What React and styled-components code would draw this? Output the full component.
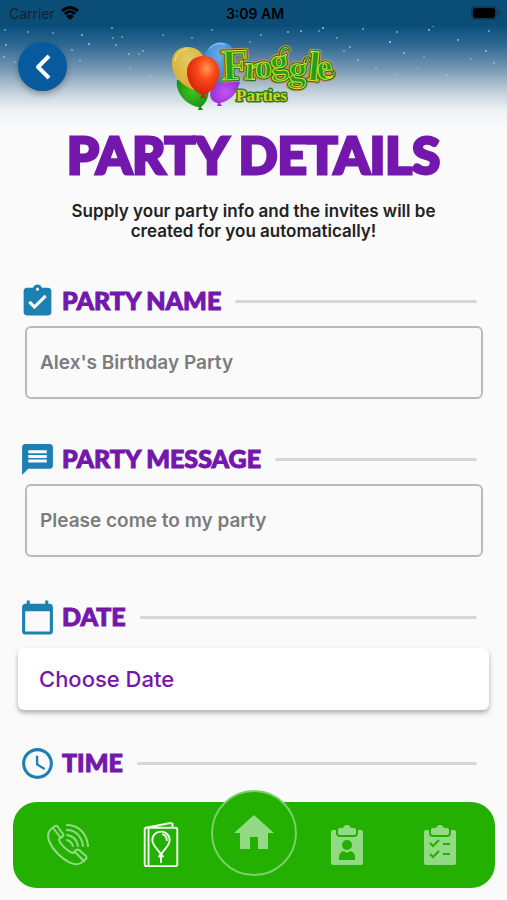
import styled, { createGlobalStyle } from 'styled-components';
import { MdAssignmentTurnedIn, MdMessage, MdCalendarToday, MdAccessTime, MdHome } from 'react-icons/md';

// [x, y, opacity]
const stars = [
    [5, 30, .5], [6, 45, .7], [28, 32, .6], [34, 50, .6], [53, 33, .5], [4, 57, .6], [72, 50, .6],
    [82, 35, .7], [89, 44, .8], [112, 28, .6], [113, 38, .5], [122, 37, .5], [116, 45, .6], [129, 54, .6],
    [139, 54, .5], [143, 51, .6], [163, 35, .5], [192, 38, .5], [250, 42, .5], [261, 35, .6], [288, 32, .7],
    [301, 31, .7], [319, 31, .5], [323, 28, .8], [344, 51, .5], [350, 47, .6], [363, 29, .6], [390, 42, .9],
    [397, 32, .6], [404, 53, .7], [429, 30, .8], [433, 26, .6], [458, 40, .7], [486, 51, .7], [489, 31, .6],
    [494, 63, .5], [447, 75, .5], [424, 57, .4], [397, 75, .4], [376, 68, .4], [358, 60, .5], [130, 68, .4],
    [80, 61, .5], [15, 62, .4], [150, 76, .4], [418, 68, .3], [471, 59, .4], [337, 38, .5], [212, 30, .5],
];

// [char, x, y, size, turn]
const letters = [
    ['F', 53, 38, 44, -2], ['r', 75, 37, 34, 3], ['o', 86, 36, 34, 0], ['g', 102, 32, 36, -5],
    ['g', 119, 38, 36, 5], ['l', 138, 38, 42, 6], ['e', 149, 38, 36, -8],
];

const Word = () => letters.map(([char, x, y, size, turn], i) => (
    <Letter key={i} x={x} y={y} fontSize={size} transform={`rotate(${turn} ${x} ${y})`}>{char}</Letter>
));

const curls = 'M112 14C110 6 118 3 120 8M135 21C135 15 141 14 141 19M157 35C164 38 168 31 163 29';

const Logo = () => (
    <LogoSvg viewBox="0 0 170 74" role="img" aria-label="Froggle Parties">
        <defs>
            <radialGradient id="red" cx=".6" cy=".3" r=".75">
                <stop offset="0" stopColor="#ff9a55" />
                <stop offset=".35" stopColor="#fb4a18" />
                <stop offset="1" stopColor="#c91508" />
            </radialGradient>
            <radialGradient id="gold" cx=".5" cy=".3" r=".8">
                <stop offset="0" stopColor="#e0cb62" />
                <stop offset=".6" stopColor="#dcb53e" />
                <stop offset="1" stopColor="#ef9a22" />
            </radialGradient>
            <radialGradient id="blue" cx=".5" cy=".3" r=".8">
                <stop offset="0" stopColor="#69aeea" />
                <stop offset="1" stopColor="#2372c4" />
            </radialGradient>
            <radialGradient id="purple" cx=".5" cy=".5" r=".7">
                <stop offset="0" stopColor="#c156f5" />
                <stop offset="1" stopColor="#8c20c8" />
            </radialGradient>
            <radialGradient id="green" cx=".5" cy=".4" r=".7">
                <stop offset="0" stopColor="#3bc41f" />
                <stop offset="1" stopColor="#128410" />
            </radialGradient>
        </defs>
        <path d="M8 38C6 52 19 64 30 65L29 68H34L32 65C40 59 42 48 36 40Z" fill="url(#green)" />
        <path d="M42 48C39 55 44 61 49 61L48 64H53L51 61C62 59 69 50 71 39C58 34 46 37 42 48Z" fill="url(#purple)" />
        <path d="M35 15C38 3 49-2 57 1C67 5 68 16 64 26C61 34 56 39 50 43C40 36 34 26 35 15Z" fill="url(#blue)" />
        <path d="M40 7C44 2 50 0 56 3" fill="none" stroke="#a8d3f5" strokeWidth="1" />
        <path d="M3 23C2 10 11 4 20 5C31 6 37 14 36 27C35 39 29 46 24 48C14 44 4 35 3 23Z" fill="url(#gold)" />
        <path d="M6 19C7 11 13 7 19 7" fill="none" stroke="#f3e79b" strokeWidth="1" />
        <path d="M18 32C17 19 27 13 36 14C47 15 52 24 50 34C48 45 40 51 35 53L37 56H31L33 53C25 49 19 42 18 32Z" fill="url(#red)" />
        {[['#c98f5c', 5], ['#176b1b', 3]].map(([color, width]) => (
            <g key={color} fill={color} stroke={color} strokeWidth={width} strokeLinejoin="round" strokeLinecap="round">
                <Word />
                <path d={curls} fill="none" />
            </g>
        ))}
        <g fill="#22a01c" stroke="#dfe02c" strokeWidth="1">
            <Word />
            <path d={curls} fill="none" strokeLinecap="round" />
        </g>
        <Letter x="67" y="59" fontSize="17" fill="#176b1b" stroke="#2c7d22" strokeWidth="3" strokeLinejoin="round" aria-hidden="true">Parties</Letter>
        <Letter x="67" y="59" fontSize="17" fill="#d0d42b">Parties</Letter>
    </LogoSvg>
);

const PhoneIcon = () => (
    <NavSvg viewBox="0 0 42 42">
        <path d="M3 6L8 2Q10 1 11 3L16 10Q17 12 15 13L12 15C12 19 21 28 26 29L29 26Q30 25 32 26L39 32Q40 34 39 35L34 39C28 43 18 37 11 30C4 23-2 13 3 6Z" />
        <path d="M6 4L14 14M28 28L37 37" />
        <path d="M20 1C32 1 40 10 41 22M20 6C29 6 35 13 36 22M20 11C26 12 30 16 31 22M20 16C23 17 25 19 26 22" />
    </NavSvg>
);

const InviteIcon = () => (
    <InviteSvg viewBox="0 0 36 48">
        <path d="M2 6H33Q35 6 35 8V44Q35 46 33 46H3Q1 46 1 44V7ZM5 6V46M2 6L28 1L30 2V6" />
        <path d="M18 34C15 28 9 25 9 19C9 7 27 7 27 19C27 25 21 28 18 34ZM16 36H20L18 33ZM18 36V42M20 13Q24 14 24 19" />
    </InviteSvg>
);

const Clipboard = ({ children }) => (
    <ClipSvg viewBox="0 0 32 42">
        <path d="M2 6H5V9Q5 13 9 13H23Q27 13 27 9V6H30Q32 6 32 8V39Q32 41 30 41H2Q0 41 0 39V8Q0 6 2 6Z" />
        <path d="M9 4H12Q13 1 16 1Q19 1 20 4H23Q25 4 25 6V9Q25 11 23 11H9Q7 11 7 9V6Q7 4 9 4Z" />
        {children}
    </ClipSvg>
);

const Section = ({ icon, title, htmlFor, children }) => (
    <Group>
        <Heading>
            {icon}
            <Label as={htmlFor ? 'label' : 'h2'} htmlFor={htmlFor}>{title}</Label>
            <Rule />
        </Heading>
        {children}
    </Group>
);

const App = () => {
    return (
        <Page>
            <GlobalStyle />
            <Header>
                <Sky aria-hidden="true">
                    {stars.map(([x, y, o]) => (
                        <circle key={`${x}-${y}`} cx={`${x / 5.07}%`} cy={y} r="1" fill="#b9e4f5" opacity={o} />
                    ))}
                </Sky>
                <StatusBar>
                    <Carrier>
                        Carrier
                        <svg width="18" height="14" viewBox="0 0 18 14">
                            <path d="M1 5Q9-2 17 5M4 8Q9 3 14 8" fill="none" stroke="#000" strokeWidth="3" />
                            <path d="M9 14L5 10Q9 7 13 10Z" />
                        </svg>
                    </Carrier>
                    <Clock>3:09 AM</Clock>
                    <Battery width="30" height="14" viewBox="0 0 30 14">
                        <rect x="0" y="0" width="26" height="14" rx="4" fill="#0b3b5a" />
                        <rect x="2" y="2" width="22" height="10" rx="3" />
                        <path d="M27 4Q32 7 27 10Z" fill="#0b3b5a" />
                    </Battery>
                </StatusBar>
                <TopRow>
                    <BackButton type="button" aria-label="Back">
                        <svg width="16" height="26" viewBox="0 0 16 26">
                            <path d="M14 2L3 13L14 24" fill="none" stroke="#fff" strokeWidth="4" strokeLinejoin="round" />
                        </svg>
                    </BackButton>
                    <Logo />
                </TopRow>
            </Header>

            <Title>PARTY DETAILS</Title>
            <Intro>Supply your party info and the invites will be created for you automatically!</Intro>

            <Form>
                <Section icon={<MdAssignmentTurnedIn />} title="PARTY NAME" htmlFor="name">
                    <Field id="name" placeholder="Alex's Birthday Party" />
                </Section>
                <Section icon={<MdMessage />} title="PARTY MESSAGE" htmlFor="message">
                    <Field id="message" placeholder="Please come to my party" />
                </Section>
                <Section icon={<MdCalendarToday />} title="DATE">
                    <Picker type="button">Choose Date</Picker>
                </Section>
                <Section icon={<MdAccessTime />} title="TIME" />
            </Form>

            <Nav>
                <NavItem href="#call" aria-label="Call"><PhoneIcon /></NavItem>
                <NavItem href="#invites" aria-label="Invites" $active><InviteIcon /></NavItem>
                <HomeItem href="#home" aria-label="Home"><MdHome /></HomeItem>
                <NavItem href="#guests" aria-label="Guests">
                    <Clipboard>
                        <circle cx="16" cy="21" r="5" fill="#24b000" />
                        <path d="M8 36Q7 28 13 27Q16 30 19 27Q25 28 24 36Z" fill="#24b000" />
                    </Clipboard>
                </NavItem>
                <NavItem href="#checklist" aria-label="Checklist">
                    <Clipboard>
                        <path d="M6 19L9 22L15 16M6 30L9 33L15 27M19 20H26M19 30H26" fill="none" stroke="#24b000" strokeWidth="2" />
                    </Clipboard>
                </NavItem>
            </Nav>
        </Page>
    );
}

const GlobalStyle = createGlobalStyle`
    * {
        box-sizing: border-box;
    }

    body {
        margin: 0;
        background: #fafafa;
        font-family: Inter, "Liberation Sans", sans-serif;
    }
`

const Page = styled.main`
    display: flex;
    flex-direction: column;
    min-height: 100vh;
    padding-bottom: 112px;
`

const Header = styled.header`
    position: relative;
    height: 128px;
    background: linear-gradient(#0a507c 26px, #2c6790 44px, #7296b2 68px, #c3d0da 92px, #edf1f3 110px, #fafafa 128px);
`

const Sky = styled.svg`
    position: absolute;
    inset: 0;
    width: 100%;
    height: 100%;
`

const StatusBar = styled.div`
    position: relative;
    display: grid;
    grid-template-columns: 1fr auto 1fr;
    align-items: center;
    height: 26px;
    padding: 0 6px 0 9px;
    font-size: 14px;
    background: #0a4e78;
`

const Carrier = styled.span`
    display: flex;
    align-items: center;
    gap: 6px;
    color: #10222f;
`

const Clock = styled.span`
    font-weight: 600;
`

const Battery = styled.svg`
    justify-self: end;
`

const TopRow = styled.div`
    position: relative;
    display: grid;
    grid-template-columns: 1fr 170px 1fr;
    align-items: start;
    padding: 16px 18px 0;
`

const BackButton = styled.button`
    display: flex;
    justify-content: center;
    align-items: center;

    width: 49px;
    height: 49px;
    padding: 0;

    border: none;
    border-radius: 50%;
    background: #075a9e;
    box-shadow: 0 3px 6px rgba(0, 0, 0, 0.3);
`

const LogoSvg = styled.svg`
    width: 170px;
    height: 74px;
    overflow: visible;
`

const Letter = styled.text`
    font-family: "Liberation Serif", serif;
    font-weight: 700;
`

const Title = styled.h1`
    margin: 0;
    color: #7317ad;
    font-family: Lato, sans-serif;
    font-size: 51px;
    font-weight: 900;
    line-height: 54px;
    text-align: center;
    -webkit-text-stroke: 3px #7317ad;
`

const Intro = styled.p`
    max-width: 400px;
    margin: 19px auto 0;
    color: #222;
    font-size: 17px;
    font-weight: 600;
    line-height: 20px;
    text-align: center;
`

const Form = styled.form`
    display: flex;
    flex-direction: column;
    margin-top: 41px;
    padding: 0 18px;
`

const Group = styled.section`
    display: flex;
    flex-direction: column;
`

const Heading = styled.div`
    display: flex;
    align-items: center;
    gap: 6px;
    height: 38px;
    padding: 0 12px 0 1px;

    > svg {
        flex: none;
        width: 37px;
        height: 37px;
        color: #1c80b2;
    }
`

const Label = styled.label`
    margin: 0;
    padding-bottom: 2px;
    color: #7317ad;
    font-family: Lato, sans-serif;
    font-size: 25px;
    font-weight: 900;
    line-height: 32px;
    -webkit-text-stroke: 1px #7317ad;
`

const Rule = styled.span`
    flex: 1;
    height: 3px;
    margin-left: 8px;
    border-radius: 2px;
    background: #d6d6d6;
`

const Field = styled.input`
    height: 73px;
    margin: 6px 6px 41px 7px;
    padding: 0 13px;

    border: 2px solid #bababa;
    border-radius: 6px;
    background: transparent;

    color: #222;
    font-family: inherit;
    font-size: 19px;
    font-weight: 600;

    &::placeholder {
        color: #7c7c7c;
        opacity: 1;
    }
`

const Picker = styled.button`
    height: 62px;
    margin: 12px 0 34px;
    padding: 0 21px;

    border: none;
    border-radius: 6px;
    background: #fff;
    box-shadow: 0 3px 5px rgba(0, 0, 0, 0.3);

    color: #7317ad;
    font-family: inherit;
    font-size: 22px;
    font-weight: 500;
    text-align: left;
`

const Nav = styled.nav`
    position: fixed;
    right: 12px;
    bottom: 12px;
    left: 13px;

    display: grid;
    grid-template-columns: repeat(5, 1fr);
    grid-template-rows: 100%;
    align-items: center;
    justify-items: center;

    height: 86px;
    padding: 0 8px;
    border-radius: 24px;
    background: #24b000;
`

const NavItem = styled.a`
    display: flex;
    color: ${(props) => props.$active ? '#f0fbee' : '#93da85'};
`

const HomeItem = styled.a`
    display: flex;
    justify-content: center;
    align-items: center;
    align-self: start;

    width: 86px;
    height: 86px;
    margin-top: -12px;

    border: 2px solid #7ad069;
    border-radius: 50%;
    background: #24b000;
    color: #93da85;

    svg {
        width: 48px;
        height: 48px;
    }
`

const NavSvg = styled.svg`
    width: 42px;
    height: 42px;
    fill: none;
    stroke: currentColor;
    stroke-width: 2;
    stroke-linejoin: round;
    stroke-linecap: round;
`

const InviteSvg = styled(NavSvg)`
    width: 36px;
    height: 46px;
`

const ClipSvg = styled.svg`
    width: 32px;
    height: 42px;
    fill: currentColor;
`

export default App;
